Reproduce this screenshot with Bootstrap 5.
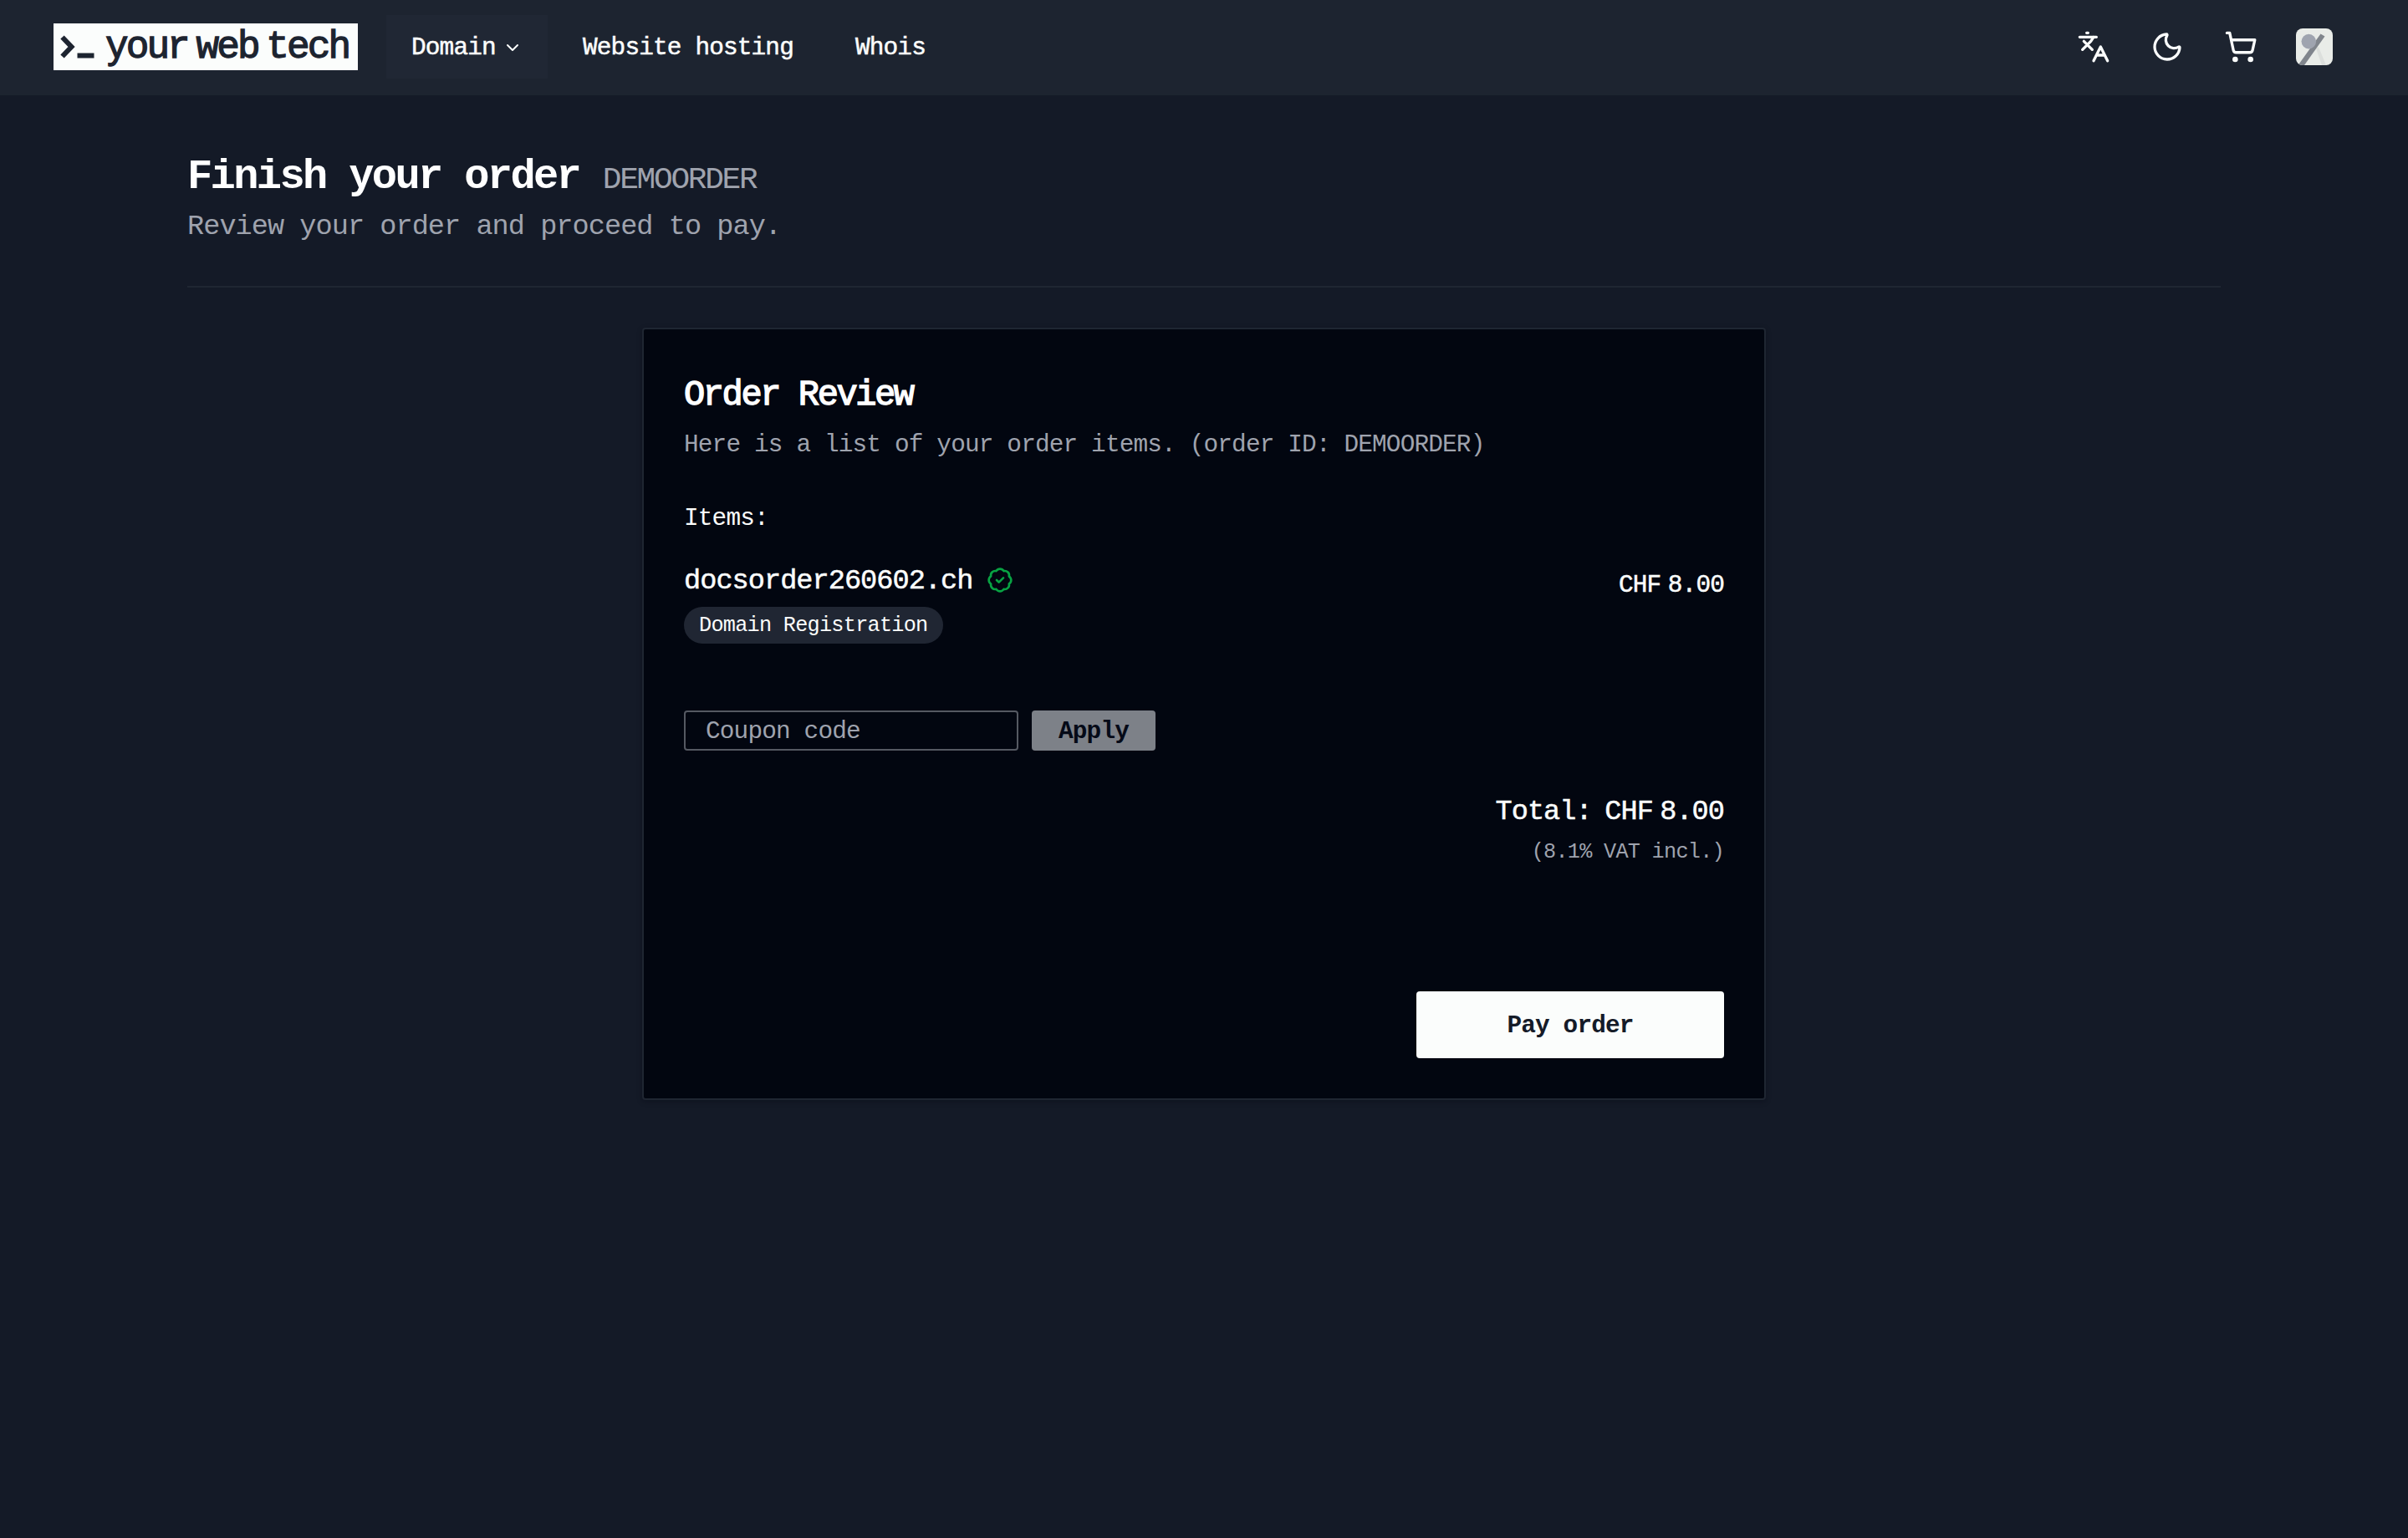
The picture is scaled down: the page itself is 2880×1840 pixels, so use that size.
<!DOCTYPE html>
<html lang="en" data-bs-theme="dark">
<head>
<meta charset="utf-8">
<meta name="viewport" content="width=device-width, initial-scale=1">
<title>Finish your order</title>
<link href="https://cdn.jsdelivr.net/npm/bootstrap@5.3.0/dist/css/bootstrap.min.css" rel="stylesheet">
<style>
  :root { --ink: #fbfdfc; --soft: #9fa3ae; --bar: #1d2430; --page: #141a27; --panel: #020610; }
  body { background: var(--page); color: var(--ink); font-family: "Liberation Mono", monospace; min-height: 1840px; }
  /* type scale: --f is the nominal size, --t extra tracking */
  .type { --t: 0px; font-size: calc(var(--f) * 1.05); letter-spacing: calc(var(--f) * -.03 + var(--t)); white-space: nowrap; }
  .f24 { --f: 24px; line-height: 32px; }
  .f28 { --f: 28px; line-height: 40px; }
  .f32 { --f: 32px; line-height: 48px; }
  .f36 { --f: 36px; line-height: 1; }
  .f40 { --f: 40px; line-height: 60px; }
  .f48 { --f: 48px; line-height: 60px; }
  .tight { --t: -1.2px; }
  .medium { -webkit-text-stroke: .5px currentColor; }
  .semi { -webkit-text-stroke: 1.4px currentColor; }
  .soft { color: var(--soft); }

  .topbar { background: var(--bar); height: 114px; padding: 0 90px 2px 64px; }
  .brand { background: var(--ink); color: var(--bar); width: 364px; height: 56px; padding-left: 8px; gap: 12px; margin-right: 34px; }
  .brand-name { font-size: 46px; line-height: 56px; letter-spacing: -2.9px; word-spacing: -15px; padding-top: 2px; -webkit-text-stroke: 1.3px currentColor; white-space: nowrap; }
  .topbar .nav-link { color: var(--ink); padding: 4px 32px 0; height: 76px; }
  .topbar .nav-link.picked { background: #202734; padding: 4px 30px 0; width: 193px; }
  .picked svg { margin: -3px 0 0 8px; }
  .nav { gap: 10px; }
  .tools { gap: 48px; }
  .tools svg { display: block; }
  .line-icon { fill: none; stroke: currentColor; stroke-width: 2; stroke-linecap: round; stroke-linejoin: round; }

  main { padding: 68px 224px 0; }
  .heading { padding-bottom: 47px; border-bottom: 2px solid #1f2632; margin-bottom: 48px; }
  .review { width: 1344px; height: 924px; background: var(--panel); border: 2px solid #1f2632; border-radius: 4px; padding: 49px 48px 48px; box-shadow: 0 2px 6px rgba(2, 6, 16, .3); }
  .verified { margin: -2px 0 0 17px; color: #08a343; }
  .tag-pill { background: #202633; width: 310px; height: 44px; line-height: 45px; padding: 0 18px; margin-top: 7px; }
  .coupon { margin-top: 80px; gap: 16px; }
  .coupon .form-control { width: 400px; height: 48px; padding: 3px 22px 0 24px; background: transparent; border: 2px solid #555962; border-radius: 4px; }
  .coupon .form-control::placeholder { color: var(--soft); opacity: 1; }
  .btn.apply, .btn.apply:disabled { width: 148px; height: 48px; padding: 0; border: 0; border-radius: 4px; background: #7d8188; color: #050a17; opacity: 1; line-height: 52px; }
  .btn.pay { width: 368px; height: 80px; padding: 0; border: 0; border-radius: 4px; background: var(--ink); color: #151b28; line-height: 84px; }
  .amount { word-spacing: -8.4px; }
  .sum { margin-top: 49px; }
  .sum .lead-in { word-spacing: -3.6px; }
  .sum .amount { word-spacing: -10.8px; }
</style>
</head>
<body>
<header class="topbar d-flex align-items-center">
  <a class="brand d-flex align-items-center text-decoration-none" href="#">
    <svg width="42" height="56" viewBox="0 0 42 56" fill="none" stroke="currentColor" aria-hidden="true">
      <path d="M2.5 16.5 13.5 28 2.5 39.5" stroke-width="6"/>
      <path d="M20.5 38.5h20" stroke-width="6"/>
    </svg>
    <span class="brand-name">your web tech</span>
  </a>
  <nav class="nav flex-nowrap type f28 medium">
    <a class="nav-link picked d-flex align-items-center" href="#">Domain
      <svg class="line-icon" width="24" height="24" viewBox="0 0 24 24"><path d="m6 9 6 6 6-6"/></svg>
    </a>
    <a class="nav-link d-flex align-items-center" href="#">Website hosting</a>
    <a class="nav-link d-flex align-items-center" href="#">Whois</a>
  </nav>
  <div class="tools d-flex align-items-center ms-auto">
    <svg class="line-icon" width="40" height="40" viewBox="0 0 24 24"><path d="m5 8 6 6M4 14l6-6 2-3M2 5h12M7 2h1M22 22l-5-10-5 10M14 18h6"/></svg>
    <svg class="line-icon" width="40" height="40" viewBox="0 0 24 24"><path d="M20.985 12.486a9 9 0 1 1-9.473-9.472c.405-.022.617.46.402.803a6 6 0 0 0 8.268 8.268c.344-.215.825-.004.803.401"/></svg>
    <svg class="line-icon" width="40" height="40" viewBox="0 0 24 24"><circle cx="8" cy="21" r="1"/><circle cx="19" cy="21" r="1"/><path d="M2.05 2.05h2l2.66 12.42a2 2 0 0 0 2 1.58h9.78a2 2 0 0 0 1.95-1.57l1.65-7.43H5.12"/></svg>
    <svg class="rounded-3" style="margin-left:-2px" width="44" height="44" viewBox="0 0 44 44">
      <path d="M0 0h44v44H0z" fill="#e9ece8"/>
      <path d="M24 24 27 22 36 44h-5z" fill="#dcdfdc"/>
      <path d="M29.5 6.5 34.5 9.5 10 44H4V42z" fill="#80858c"/>
      <circle cx="15.3" cy="15.6" r="8.8" fill="#9fa4af"/>
    </svg>
  </div>
</header>

<main>
  <section class="heading">
    <h1 class="type f48 tight fw-bold m-0">Finish your order <span class="type f36 tight fw-normal soft">DEMOORDER</span></h1>
    <p class="type f32 soft m-0" style="padding-top:5px">Review your order and proceed to pay.</p>
  </section>

  <section class="review mx-auto d-flex flex-column">
    <h2 class="type f40 tight semi fw-normal m-0">Order Review</h2>
    <p class="type f28 soft mb-0" style="margin-top:10px">Here is a list of your order items. (order ID: DEMOORDER)</p>
    <p class="type f28 mb-0" style="margin-top:48px">Items:</p>

    <div class="d-flex justify-content-between align-items-start" style="margin-top:30px">
      <div>
        <div class="d-flex align-items-center">
          <span class="type f32 medium">docsorder260602.ch</span>
          <svg class="line-icon verified" width="32" height="32" viewBox="0 0 24 24"><path d="M3.85 8.62a4 4 0 0 1 4.78-4.77 4 4 0 0 1 6.74 0 4 4 0 0 1 4.78 4.78 4 4 0 0 1 0 6.74 4 4 0 0 1-4.77 4.78 4 4 0 0 1-6.75 0 4 4 0 0 1-4.78-4.77 4 4 0 0 1 0-6.76Z"/><path d="m9 12 2 2 4-4"/></svg>
        </div>
        <div class="tag-pill rounded-pill type f24">Domain Registration</div>
      </div>
      <div class="type f28 medium amount" style="padding-top:10px">CHF&nbsp;8.00</div>
    </div>

    <form class="coupon d-flex">
      <input class="form-control type f28" type="text" placeholder="Coupon code" aria-label="Coupon code">
      <button class="btn apply type f28 fw-bold" type="button" disabled>Apply</button>
    </form>

    <div class="sum text-end">
      <div class="type f32 medium"><span class="lead-in">Total: </span><span class="amount">CHF&nbsp;8.00</span></div>
      <div class="type f24 soft" style="margin-top:9px">(8.1% VAT incl.)</div>
    </div>

    <button class="btn pay type f28 fw-bold mt-auto ms-auto" type="button">Pay order</button>
  </section>
</main>
<script src="https://cdn.jsdelivr.net/npm/bootstrap@5.3.0/dist/js/bootstrap.bundle.min.js"></script>
</body>
</html>
